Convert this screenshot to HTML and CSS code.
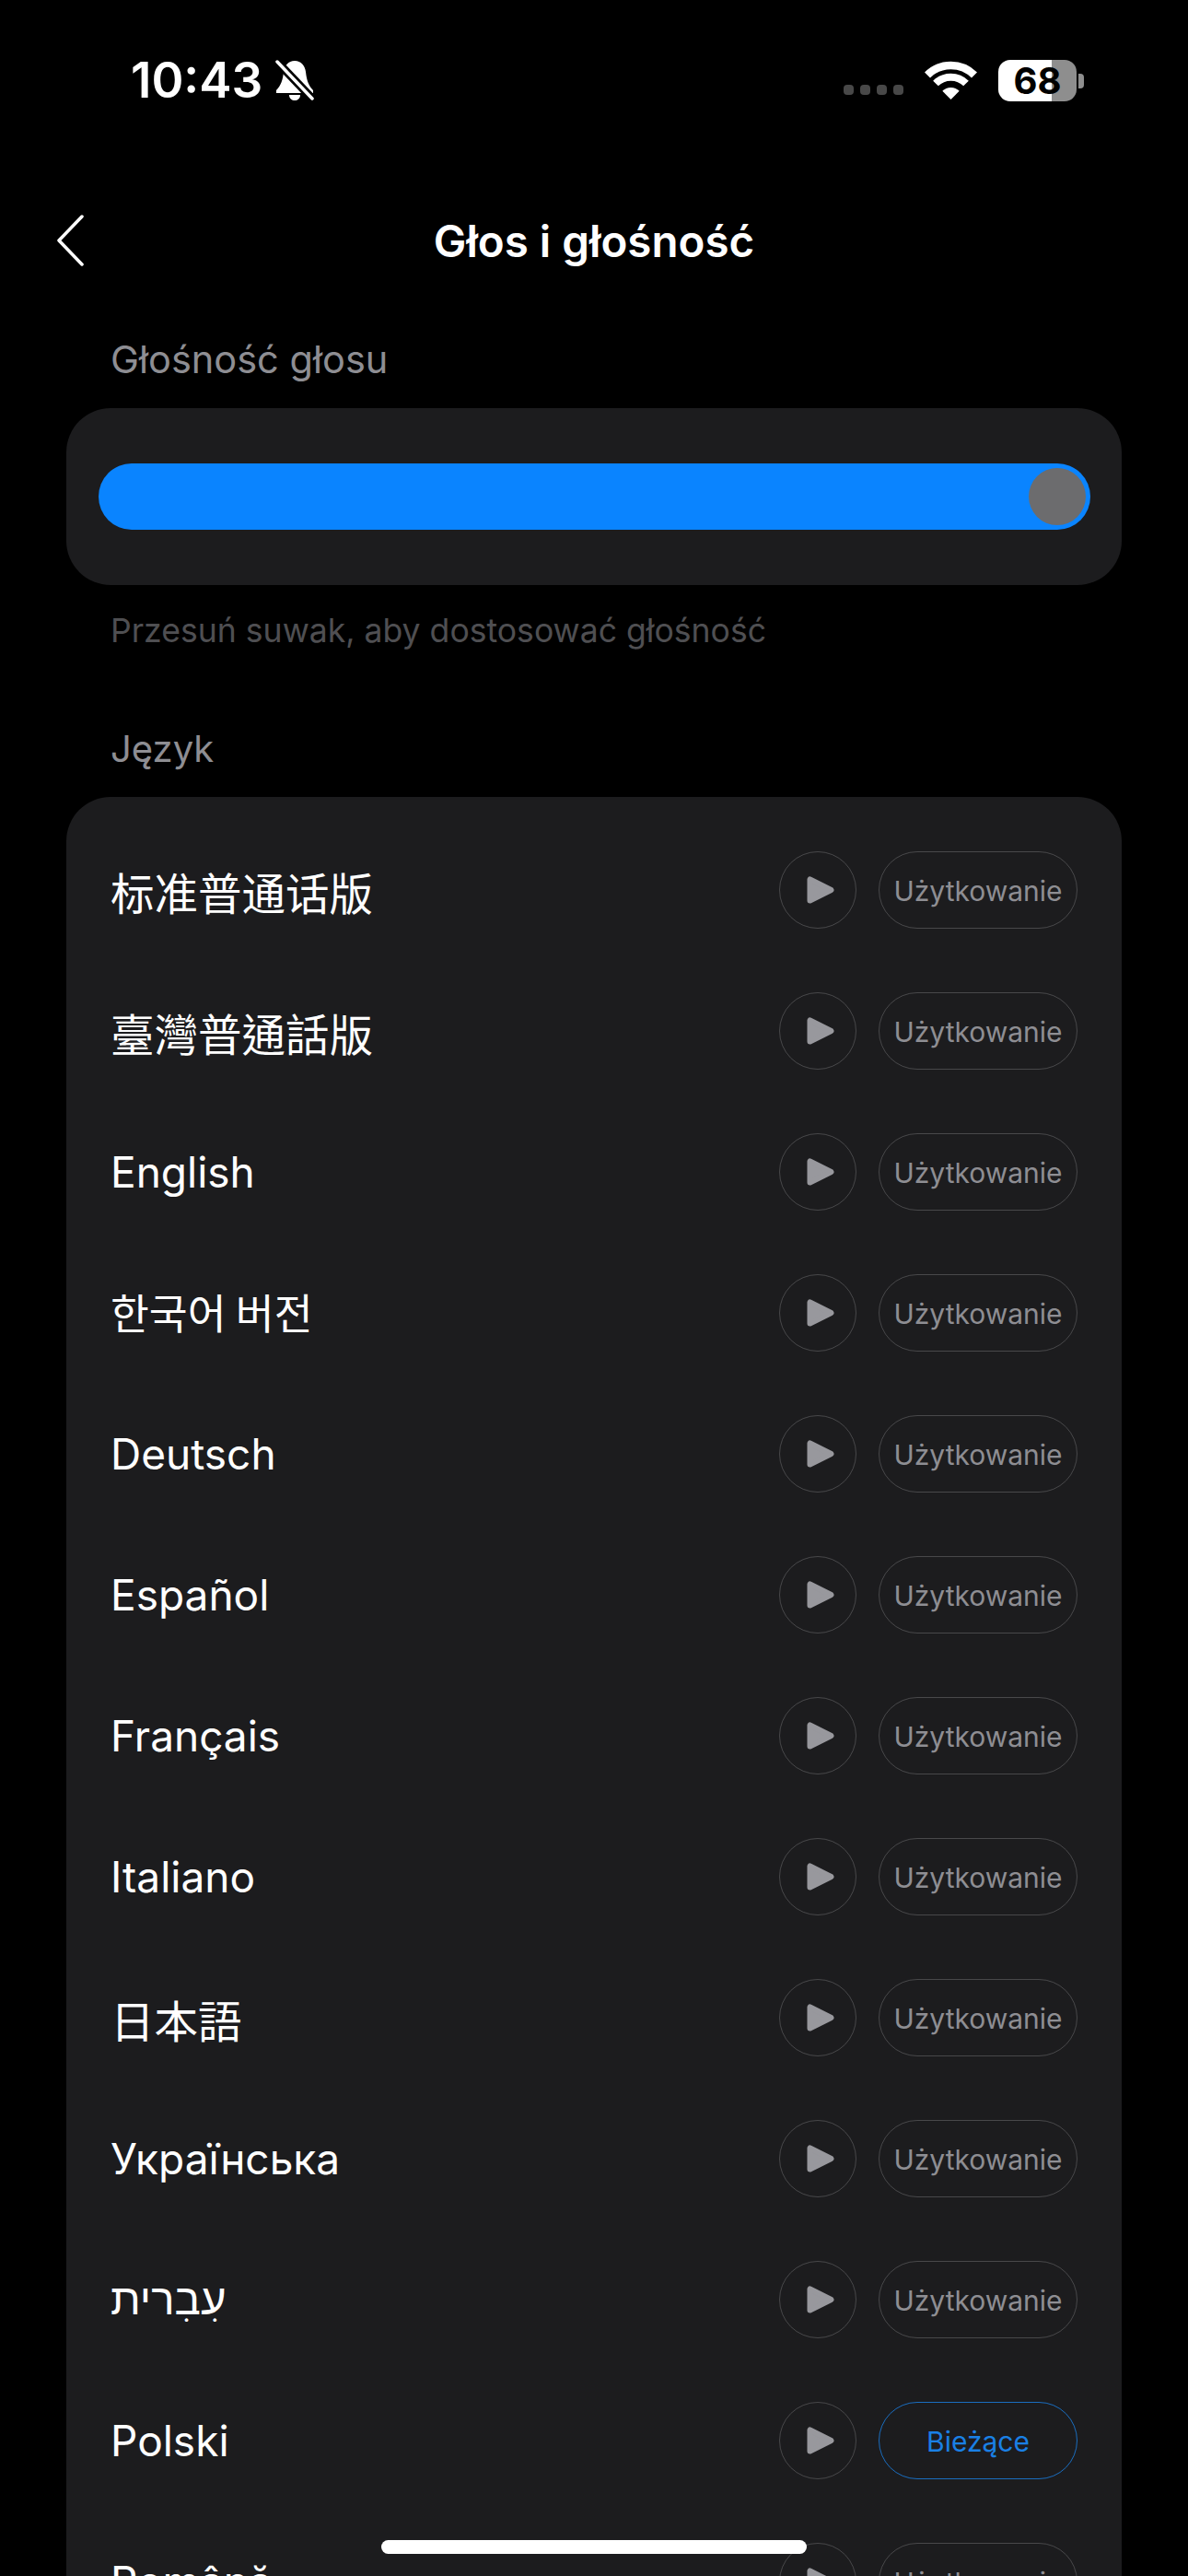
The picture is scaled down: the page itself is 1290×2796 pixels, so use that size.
FILE: index.html
```html
<!DOCTYPE html>
<html lang="pl">
<head>
	<meta charset="UTF-8">
	<title>Głos i głośność</title>
	<link rel="stylesheet" href="styles.css">
</head>
<body>
	<svg class="defs" width="0" height="0">
		<symbol id="play" viewBox="0 0 30 30">
			<path d="M3.5 3.5 L3.5 26.5 L26.5 15 Z" fill="#98989d" stroke="#98989d" stroke-width="6" stroke-linejoin="round"/>
		</symbol>
	</svg>

	<div class="page">
		<!-- status bar -->
		<div class="status">
			<div class="status-left">
				<span class="time">10:43</span>
				<svg class="bell" viewBox="0 0 42 44">
					<path d="M21 1 C28 1 32 6 33 13 C34 22 36 28 41 33 L41 36 L1 36 L1 33 C6 28 8 22 9 13 C10 6 14 1 21 1 Z" fill="#fff"/>
					<path d="M15 38 L27 38 C27 42 24 44 21 44 C18 44 15 42 15 38 Z" fill="#fff"/>
					<path d="M0 0 L42 44" stroke="#000" stroke-width="9"/>
					<path d="M2 2 L40 42" stroke="#fff" stroke-width="3.5" stroke-linecap="round"/>
				</svg>
			</div>
			<div class="status-right">
				<div class="dots"><i></i><i></i><i></i><i></i></div>
				<svg class="wifi" viewBox="0 0 57 42">
					<path d="M3 15.5 A36 36 0 0 1 54 15.5" fill="none" stroke="#fff" stroke-width="8.5"/>
					<path d="M12 24.5 A23.3 23.3 0 0 1 45 24.5" fill="none" stroke="#fff" stroke-width="8"/>
					<path d="M28.5 42 L19.3 32.8 A13 13 0 0 1 37.7 32.8 Z" fill="#fff"/>
				</svg>
				<div class="battery">68</div>
			</div>
		</div>

		<!-- title bar -->
		<div class="nav">
			<svg class="back" viewBox="0 0 30 56">
				<path d="M28 2 L3 28 L28 54" fill="none" stroke="#fff" stroke-width="3.5" stroke-linecap="round" stroke-linejoin="round"/>
			</svg>
			<h1 class="title">Głos i głośność</h1>
		</div>

		<div class="label label-volume">Głośność głosu</div>
		<div class="panel">
			<div class="track"><div class="thumb"></div></div>
		</div>
		<div class="hint">Przesuń suwak, aby dostosować głośność</div>

		<div class="label label-lang">Język</div>
		<div class="card">
			<div class="row">
				<span class="name cjk-sc">标准普通话版</span>
				<div class="play"><svg class="play-icon"><use href="#play"/></svg></div>
				<div class="pill">Użytkowanie</div>
			</div>
			<div class="row">
				<span class="name cjk-tc">臺灣普通話版</span>
				<div class="play"><svg class="play-icon"><use href="#play"/></svg></div>
				<div class="pill">Użytkowanie</div>
			</div>
			<div class="row">
				<span class="name">English</span>
				<div class="play"><svg class="play-icon"><use href="#play"/></svg></div>
				<div class="pill">Użytkowanie</div>
			</div>
			<div class="row">
				<span class="name cjk-kr">한국어 버전</span>
				<div class="play"><svg class="play-icon"><use href="#play"/></svg></div>
				<div class="pill">Użytkowanie</div>
			</div>
			<div class="row">
				<span class="name">Deutsch</span>
				<div class="play"><svg class="play-icon"><use href="#play"/></svg></div>
				<div class="pill">Użytkowanie</div>
			</div>
			<div class="row">
				<span class="name">Español</span>
				<div class="play"><svg class="play-icon"><use href="#play"/></svg></div>
				<div class="pill">Użytkowanie</div>
			</div>
			<div class="row">
				<span class="name">Français</span>
				<div class="play"><svg class="play-icon"><use href="#play"/></svg></div>
				<div class="pill">Użytkowanie</div>
			</div>
			<div class="row">
				<span class="name">Italiano</span>
				<div class="play"><svg class="play-icon"><use href="#play"/></svg></div>
				<div class="pill">Użytkowanie</div>
			</div>
			<div class="row">
				<span class="name cjk-jp">日本語</span>
				<div class="play"><svg class="play-icon"><use href="#play"/></svg></div>
				<div class="pill">Użytkowanie</div>
			</div>
			<div class="row">
				<span class="name">Українська</span>
				<div class="play"><svg class="play-icon"><use href="#play"/></svg></div>
				<div class="pill">Użytkowanie</div>
			</div>
			<div class="row">
				<span class="name hebrew">עִבִרית</span>
				<div class="play"><svg class="play-icon"><use href="#play"/></svg></div>
				<div class="pill">Użytkowanie</div>
			</div>
			<div class="row">
				<span class="name">Polski</span>
				<div class="play"><svg class="play-icon"><use href="#play"/></svg></div>
				<div class="pill pill-current">Bieżące</div>
			</div>
			<div class="row">
				<span class="name">Română</span>
				<div class="play"><svg class="play-icon"><use href="#play"/></svg></div>
				<div class="pill">Użytkowanie</div>
			</div>
		</div>

		<div class="home-bar"></div>
	</div>
</body>
</html>
```

FILE: styles.css
```css
* {
	box-sizing: border-box;
}
html, body {
	margin: 0;
	background: #000;
}
body {
	font-family: Inter, "Noto Sans", "Noto Sans CJK SC", sans-serif;
	color: #fff;
}
.defs {
	position: absolute;
}
.page {
	position: relative;
	width: 1290px;
	height: 2796px;
	overflow: hidden;
	padding: 0 72px;
}

/* status bar */
.status {
	display: flex;
	justify-content: space-between;
	align-items: center;
	height: 54px;
	margin: 60px -72px 0;
	padding: 0 113px 0 142px;
}
.status-left {
	display: flex;
	align-items: center;
	gap: 14px;
}
.time {
	font-size: 53px;
	line-height: 54px;
	font-weight: 600;
}
.bell {
	width: 42px;
	height: 44px;
}
.status-right {
	display: flex;
	align-items: center;
}
.dots {
	display: flex;
	gap: 7px;
	margin: 21px 23px 0 0;
}
.dots i {
	width: 11px;
	height: 11px;
	border-radius: 4px;
	background: #484848;
}
.wifi {
	width: 57px;
	height: 42px;
	margin-right: 23px;
}
.battery {
	position: relative;
	width: 85px;
	height: 45px;
	margin-right: 8px;
	border-radius: 13px;
	background: linear-gradient(90deg, #fff 68%, #8e8e8e 68%);
	color: #000;
	font-size: 40px;
	line-height: 45px;
	font-weight: 700;
	text-align: center;
}
.battery::after {
	content: "";
	position: absolute;
	right: -8px;
	top: 15px;
	width: 6px;
	height: 16px;
	border-radius: 0 4px 4px 0;
	background: #8e8e8e;
}

/* title bar */
.nav {
	position: relative;
	display: flex;
	justify-content: center;
	align-items: center;
	height: 96px;
	margin-top: 100px;
}
.back {
	position: absolute;
	left: -11px;
	top: 19px;
	width: 30px;
	height: 56px;
}
.title {
	margin: 0;
	font-size: 47.5px;
	font-weight: 600;
	line-height: 96px;
}

.label {
	margin-left: 48px;
	font-size: 41.5px;
	line-height: 50px;
	color: #8e8e93;
}
.label-volume {
	margin-top: 55px;
}
.label-lang {
	margin-top: 82px;
	font-size: 40px;
}
.panel {
	margin-top: 28px;
	height: 192px;
	padding: 60px 34px 60px 35px;
	border-radius: 48px;
	background: #1c1c1e;
}
.track {
	display: flex;
	justify-content: flex-end;
	align-items: center;
	height: 72px;
	padding-right: 5px;
	border-radius: 36px;
	background: #0a84ff;
}
.thumb {
	width: 62px;
	height: 62px;
	border-radius: 50%;
	background: #6c6c6e;
}
.hint {
	margin: 29px 0 0 48px;
	font-size: 35.6px;
	line-height: 42px;
	color: #4f4f52;
}

/* language list */
.card {
	margin-top: 27px;
	height: 2100px;
	padding: 24.5px 48px 0 48px;
	border-radius: 48px;
	background: #1c1c1e;
}
.row {
	display: flex;
	align-items: center;
	height: 153px;
}
.name {
	flex: 1;
	font-size: 46px;
	line-height: 60px;
}
.cjk-sc {
	padding-top: 4px;
	font-size: 47.5px;
	font-family: "Noto Sans CJK SC", sans-serif;
}
.cjk-tc {
	padding-top: 4px;
	font-size: 47.5px;
	font-family: "Noto Sans CJK TC", sans-serif;
}
.cjk-kr {
	padding-bottom: 5px;
	font-size: 45.5px;
	font-family: "Noto Sans CJK KR", sans-serif;
}
.cjk-jp {
	padding-top: 4px;
	font-size: 47.5px;
	font-family: "Noto Sans CJK JP", sans-serif;
}
.hebrew {
	font-size: 47.5px;
	font-family: "Liberation Sans", sans-serif;
}
.play {
	display: flex;
	justify-content: center;
	align-items: center;
	width: 84px;
	height: 84px;
	border: 1.5px solid #48484a;
	border-radius: 50%;
}
.play-icon {
	width: 30px;
	height: 30px;
	margin-left: 5px;
}
.pill {
	width: 216px;
	height: 84px;
	margin-left: 24px;
	border: 1.5px solid #48484a;
	border-radius: 42px;
	font-size: 30px;
	line-height: 85px;
	text-align: center;
	color: #8e8e93;
}
.pill-current {
	border-color: #1a6dbf;
	color: #1a80e5;
}

.home-bar {
	position: absolute;
	left: 414px;
	top: 2757px;
	width: 462px;
	height: 15px;
	border-radius: 8px;
	background: #fff;
}
```
